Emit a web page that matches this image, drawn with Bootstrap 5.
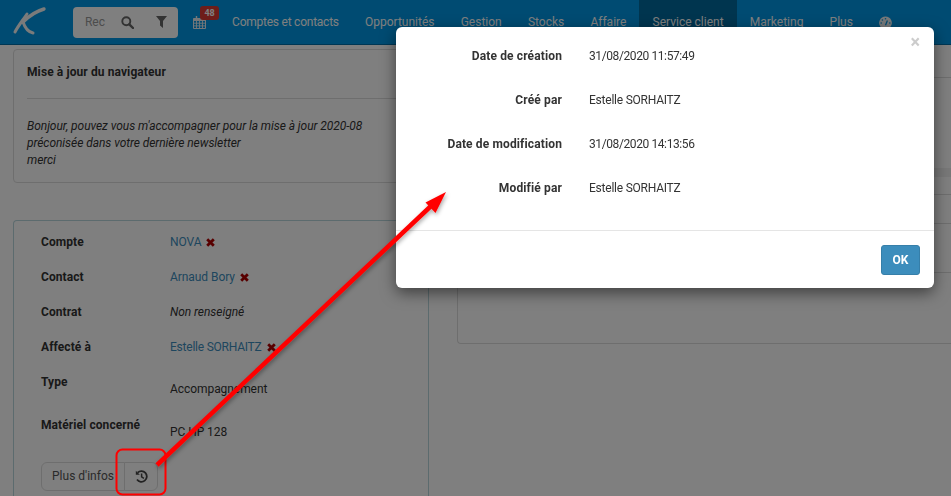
<!DOCTYPE html>
<html lang="fr">
<head>
    <meta charset="UTF-8">
    <meta name="viewport" content="width=device-width, initial-scale=1.0">
    <title>Service client</title>
    <link href="https://cdn.jsdelivr.net/npm/bootstrap@5.3.0/dist/css/bootstrap.min.css" rel="stylesheet">
    <style>
        html, body { height: 496px; overflow: hidden; }
        body { background: #fff; color: #333; font-family: "Roboto", "Liberation Sans", sans-serif; font-size: 12px; line-height: 17px; letter-spacing: -.06px; }
        a { color: #3c8dbc; text-decoration: none; }

        /* top bar */
        .top-bar { height: 45px; background: #0097e4; border-bottom: 1px solid #006fa8; padding: 0; flex-wrap: nowrap; justify-content: flex-start; }
        .brand-logo { width: 73px; height: 45px; padding: 0; margin: 0; }
        .search-box { width: 105px; height: 31px; background: #fff; border-radius: 4px; }
        .search-input { width: 38px; padding-left: 12px; color: #999; white-space: nowrap; }
        .search-tool { width: 34px; height: 13px; }
        .cal-item { width: 41px; height: 45px; }
        .cal-item svg { position: absolute; left: 15px; top: 16px; }
        .cal-badge { position: absolute; left: 22px; top: 6px; width: 19px; height: 14px; background: #dd3a33; color: #fff; font-size: 9px; font-weight: 700; line-height: 14px; text-align: center; border-radius: 3px; }
        .top-menu { flex-direction: row; height: 45px; flex-wrap: nowrap; }
        .top-menu .nav-link { color: #fff; padding: 14px 13.1px; height: 45px; white-space: nowrap; line-height: 17px; letter-spacing: 0; }
        .top-menu .nav-item:first-child .nav-link { letter-spacing: -.24px; }
        .top-menu .nav-link.current { background: #006a9e; }

        /* page columns */
        .page-cols { padding: 4px 0 0 13px; height: 451px; overflow: hidden; }
        .left-col { width: 416px; flex: none; }
        .right-col { flex: 1; margin-left: 28px; }
        .note-box { height: 134px; border: 1px solid #ddd; border-radius: 4px; padding: 0 13px; }
        .note-title { font-weight: 700; height: 49px; line-height: 45px; border-bottom: 1px solid #ddd; margin-bottom: 19px; letter-spacing: .1px; }
        .note-text { font-style: italic; }
        .info-box { height: 276px; margin-top: 37px; border: 1px solid #b9d6dc; border-bottom: 0; border-radius: 4px 4px 0 0; padding: 4px 27px 0; }
        .info-row { height: 35px; display: flex; align-items: center; }
        .info-row.tall { height: 43px; align-items: flex-start; }
        .info-row.tall .info-label { line-height: 35px; }
        .info-row.tall .info-value { padding-top: 16px; }
        .info-label { width: 129px; font-weight: 700; flex: none; letter-spacing: .08px; }
        .info-value { display: flex; align-items: center; gap: 5px; }
        .name-text { letter-spacing: -.23px; }
        .btn-soft { height: 29px; padding: 0; font-size: 12px; color: #555; background: #fff; border: 1px solid #ddd; line-height: 27px; flex: none; }
        .btn-more { width: 84px; }
        .btn-hist { width: 34px; }
        .more-group { margin-top: 11px; }
        .line-a { height: 29px; border-bottom: 1px solid #ddd; }
        .band { height: 9px; background: #f0f0f0; margin-top: 90px; }
        .line-b { height: 18px; border-bottom: 1px solid #ddd; }
        .line-c { height: 29px; border-bottom: 1px solid #ddd; }
        .line-d { height: 49px; border-bottom: 1px solid #ddd; }
        .side-box { height: 71px; border-left: 1px solid #ddd; border-bottom: 1px solid #ddd; border-radius: 0 0 0 4px; }

        /* modal on top */
        .time-modal { position: absolute; left: 396px; top: 27px; width: 538px; height: 261px; z-index: 1060; background: #fff; border: 0; border-radius: 6px; box-shadow: 0 5px 15px rgba(0,0,0,.5); }
        .time-close { position: absolute; right: 14px; top: 6px; color: #ccc; font-size: 18px; font-weight: 700; line-height: 18px; }
        .time-body { padding: 7px 0 20px; flex: none; }
        .time-row { height: 44px; display: flex; align-items: center; }
        .time-label { width: 166px; text-align: right; font-weight: 700; flex: none; letter-spacing: .13px; }
        .time-value { margin-left: 27px; }
        .date-text { letter-spacing: -.4px; }
        .time-foot { padding: 14px; border-top: 1px solid #e5e5e5; }
        .btn-ok { width: 39px; height: 30px; padding: 0; background: #3c8dbc; border: 1px solid #367fa9; border-radius: 3px; color: #fff; font-size: 12px; font-weight: 700; }
        .mark-layer { position: absolute; left: 0; top: 0; z-index: 1070; pointer-events: none; }
    </style>
</head>
<body>
    <!-- top bar -->
    <nav class="navbar top-bar">
        <a class="navbar-brand brand-logo" href="#">
            <svg width="73" height="45" viewBox="0 0 73 45">
                <g fill="none" stroke="#f4f6f6" stroke-linecap="round">
                    <path d="M27 14C23 20 18 26 15 32" stroke-width="3"/>
                    <path d="M44 9C37 11 29 16 23 22" stroke-width="3.4"/>
                    <path d="M23 22C25 28 28 32 33 33" stroke-width="3"/>
                </g>
            </svg>
        </a>
        <div class="search-box d-flex align-items-center">
            <div class="search-input">Rec</div>
            <div class="search-tool d-flex justify-content-center">
                <svg width="13" height="13" viewBox="0 0 13 13"><circle cx="5.3" cy="5.3" r="4" fill="none" stroke="#666" stroke-width="1.9"/><path d="M8.3 8.3 12 12" stroke="#666" stroke-width="2.4" stroke-linecap="round"/></svg>
            </div>
            <div class="search-tool d-flex justify-content-center">
                <svg width="11" height="12" viewBox="0 0 11 12"><path d="M0 0H11L7 5V12L4 9.5V5Z" fill="#666"/></svg>
            </div>
        </div>
        <div class="cal-item position-relative">
            <svg width="13" height="13" viewBox="0 0 13 13">
                <path d="M.5 2.5H12.5V12.5H.5Z" fill="none" stroke="#e8eef2"/>
                <path d="M.5 2.5H12.5V5H.5Z" fill="#e8eef2"/>
                <path d="M.5 7.2H12.5M.5 9.9H12.5M3.5 5V12.5M6.5 5V12.5M9.5 5V12.5" stroke="#e8eef2" stroke-width=".9"/>
                <path d="M3.5 0V3M9.5 0V3" stroke="#e8eef2" stroke-width="1.4"/>
            </svg>
            <span class="cal-badge">48</span>
        </div>
        <ul class="navbar-nav top-menu">
            <li class="nav-item"><a class="nav-link" href="#">Comptes et contacts</a></li>
            <li class="nav-item"><a class="nav-link" href="#">Opportunités</a></li>
            <li class="nav-item"><a class="nav-link" href="#">Gestion</a></li>
            <li class="nav-item"><a class="nav-link" href="#">Stocks</a></li>
            <li class="nav-item"><a class="nav-link" href="#">Affaire</a></li>
            <li class="nav-item"><a class="nav-link current" href="#">Service client</a></li>
            <li class="nav-item"><a class="nav-link" href="#">Marketing</a></li>
            <li class="nav-item"><a class="nav-link" href="#">Plus</a></li>
            <li class="nav-item"><a class="nav-link" href="#">
                <svg width="13" height="13" viewBox="0 0 13 13"><path d="M6.5 .5A6.3 6.3 0 0 1 11.3 10.9 1.2 1.2 0 0 1 10.4 11.5H2.6A1.2 1.2 0 0 1 1.7 10.9 6.3 6.3 0 0 1 6.5 .5Z" fill="#eef2f4"/><path d="M6.5 9.2 8.4 4.6" stroke="#0097e4" stroke-width="1.3"/><g fill="#0097e4"><circle cx="6.5" cy="2.7" r=".8"/><circle cx="3.4" cy="4" r=".8"/><circle cx="2.2" cy="7" r=".8"/><circle cx="10.8" cy="7" r=".8"/></g></svg>
            </a></li>
        </ul>
    </nav>

    <div class="d-flex page-cols">
        <div class="left-col">
            <div class="note-box">
                <div class="note-title">Mise à jour du navigateur</div>
                <div class="note-text">Bonjour, pouvez vous m'accompagner pour la mise à jour 2020-08<br>préconisée dans votre dernière newsletter<br>merci</div>
            </div>
            <div class="info-box">
                <div class="info-row">
                    <div class="info-label">Compte</div>
                    <div class="info-value"><a href="#">NOVA</a>
                        <svg width="9" height="9" viewBox="0 0 9 9"><path d="M1.2 1.2 7.8 7.8M7.8 1.2 1.2 7.8" stroke="#b00000" stroke-width="2.8"/></svg></div>
                </div>
                <div class="info-row">
                    <div class="info-label">Contact</div>
                    <div class="info-value"><a href="#">Arnaud Bory</a>
                        <svg width="9" height="9" viewBox="0 0 9 9"><path d="M1.2 1.2 7.8 7.8M7.8 1.2 1.2 7.8" stroke="#b00000" stroke-width="2.8"/></svg></div>
                </div>
                <div class="info-row">
                    <div class="info-label">Contrat</div>
                    <div class="info-value fst-italic">Non renseigné</div>
                </div>
                <div class="info-row">
                    <div class="info-label">Affecté à</div>
                    <div class="info-value"><a class="name-text" href="#">Estelle SORHAITZ</a>
                        <svg width="9" height="9" viewBox="0 0 9 9"><path d="M1.2 1.2 7.8 7.8M7.8 1.2 1.2 7.8" stroke="#b00000" stroke-width="2.8"/></svg></div>
                </div>
                <div class="info-row tall">
                    <div class="info-label">Type</div>
                    <div class="info-value">Accompagnement</div>
                </div>
                <div class="info-row tall">
                    <div class="info-label">Matériel concerné</div>
                    <div class="info-value">PC HP 128</div>
                </div>
                <div class="btn-group more-group">
                    <button class="btn btn-soft btn-more">Plus d'infos</button>
                    <button class="btn btn-soft btn-hist">
                        <svg width="13" height="13" viewBox="0 0 13 13"><path d="M2.6 2.6A5.4 5.4 0 1 1 2 9.6" fill="none" stroke="#444" stroke-width="1.8"/><path d="M.8 .8V4.8H4.8Z" fill="#444"/><path d="M6.6 3.5V6.9L8.9 8.3" fill="none" stroke="#444" stroke-width="1.5"/></svg>
                    </button>
                </div>
            </div>
        </div>
        <div class="right-col">
            <div class="line-a"></div>
            <div class="band"></div>
            <div class="line-b"></div>
            <div class="line-c"></div>
            <div class="line-d"></div>
            <div class="side-box"></div>
        </div>
    </div>

    <div class="modal-backdrop show"></div>

    <!-- history dialog -->
    <div class="modal-content time-modal">
        <span class="time-close">×</span>
        <div class="time-body">
            <div class="time-row"><div class="time-label">Date de création</div><div class="time-value date-text">31/08/2020 11:57:49</div></div>
            <div class="time-row"><div class="time-label">Créé par</div><div class="time-value name-text">Estelle SORHAITZ</div></div>
            <div class="time-row"><div class="time-label">Date de modification</div><div class="time-value date-text">31/08/2020 14:13:56</div></div>
            <div class="time-row"><div class="time-label">Modifié par</div><div class="time-value name-text">Estelle SORHAITZ</div></div>
        </div>
        <div class="time-foot d-flex justify-content-end">
            <button class="btn btn-ok">OK</button>
        </div>
    </div>

    <!-- annotation drawn over the screenshot -->
    <svg class="mark-layer" width="951" height="496" viewBox="0 0 951 496">
        <defs><filter id="markShadow" x="-10%" y="-10%" width="120%" height="120%"><feDropShadow dx="1" dy="2" stdDeviation="2" flood-color="#000" flood-opacity=".35"/></filter></defs>
        <rect x="116.5" y="449.5" width="49" height="45" rx="6" fill="none" stroke="#ff0000" stroke-width="2"/>
        <g filter="url(#markShadow)">
            <path d="M157 465 431 206" stroke="#ff0000" stroke-width="4.5" fill="none"/>
            <path d="M446 192 435.5 213 425.5 202.5Z" fill="#ff0000"/>
        </g>
    </svg>

    <script src="https://cdn.jsdelivr.net/npm/bootstrap@5.3.0/dist/js/bootstrap.bundle.min.js"></script>
</body>
</html>
